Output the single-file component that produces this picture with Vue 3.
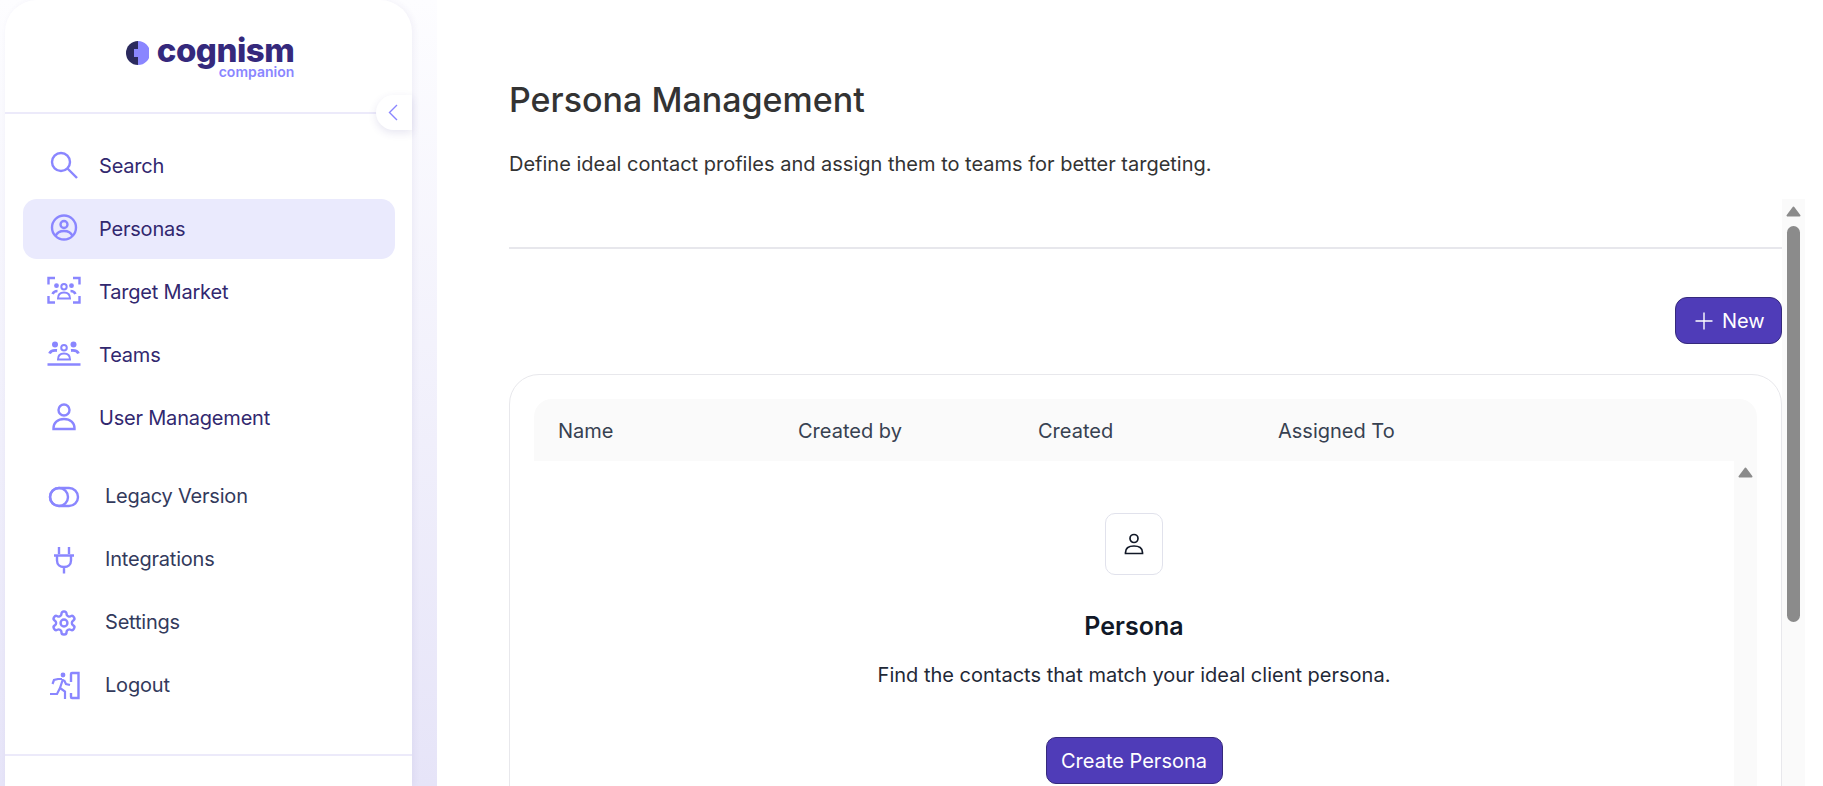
<template>
  <div class="page">
    <aside class="side">
      <div class="logo-box">
        <div class="logo">
          <svg class="logo__mark" width="24" height="24" viewBox="0 0 24 24">
            <path d="M13 0a12 12 0 1 0 0 24z" fill="#2b2a5e" />
            <path d="M13 0a12 12 0 0 1 0 24v-8H9V8h4z" fill="#8a86ff" />
          </svg>
          <div class="logo__words">
            <div class="logo__name">cognism</div>
            <div class="logo__sub">companion</div>
          </div>
        </div>
        <button class="collapse">
          <svg width="10" height="17" viewBox="0 0 10 17" fill="none" stroke="#8a86ff" stroke-width="1.400">
            <path d="M9 1 1.500 8.500 9 16" />
          </svg>
        </button>
      </div>

      <nav class="nav">
        <a v-for="item in mainLinks" :key="item.label" class="nav__item" :class="{ 'nav__item--on': item.on }">
          <span class="nav__icon" v-html="item.icon"></span>
          <span class="nav__label">{{ item.label }}</span>
        </a>
      </nav>

      <nav class="nav nav--second">
        <a v-for="item in otherLinks" :key="item.label" class="nav__item nav__item--plain">
          <span class="nav__icon" v-html="item.icon"></span>
          <span class="nav__label">{{ item.label }}</span>
        </a>
      </nav>

      <div class="side__foot"></div>
    </aside>

    <div class="gutter"></div>

    <main class="main">
      <header class="head">
        <h1 class="head__title">Persona Management</h1>
        <p class="head__text">Define ideal contact profiles and assign them to teams for better targeting.</p>
      </header>

      <div class="body">
        <div class="body__col">
          <hr class="rule" />
          <div class="actions">
            <button class="btn btn--new">
              <svg width="18" height="18" viewBox="0 0 18 18" stroke="#fff" stroke-width="1.400"><path d="M9 0.500v17M0.500 9h17" /></svg>
              New
            </button>
          </div>

          <section class="card">
            <div class="table-head">
              <span v-for="col in columns" :key="col" class="table-head__cell">{{ col }}</span>
            </div>
            <div class="table-body">
              <div class="empty">
                <div class="empty__icon">
                  <svg width="20" height="22" viewBox="0 0 20 22" fill="none" stroke="#111827" stroke-width="1.700">
                    <circle cx="10" cy="5.500" r="4" />
                    <path d="M1.500 20.500v-1c0-4.500 3.500-6.500 8.500-6.500s8.500 2 8.500 6.500v1z" />
                  </svg>
                </div>
                <h2 class="empty__title">Persona</h2>
                <p class="empty__text">Find the contacts that match your ideal client persona.</p>
                <button class="btn btn--create">Create Persona</button>
              </div>
              <div class="bar bar--inner">
                <svg class="bar__arrow" width="15" height="11" viewBox="0 0 15 11" fill="#8b8b8b" stroke="#8b8b8b" stroke-width="2" stroke-linejoin="round"><path d="M7.500 1.500 1.500 9.500h12z" /></svg>
              </div>
            </div>
          </section>
        </div>

        <div class="bar">
          <svg class="bar__arrow" width="15" height="11" viewBox="0 0 15 11" fill="#8b8b8b" stroke="#8b8b8b" stroke-width="2" stroke-linejoin="round"><path d="M7.500 1.500 1.500 9.500h12z" /></svg>
          <div class="bar__thumb"></div>
        </div>
      </div>
    </main>
  </div>
</template>

<script setup>
const wrap = (inner) =>
  `<svg width="36" height="32" viewBox="0 0 36 32" fill="none" stroke="#8a86ff" stroke-width="2.400">${inner}</svg>`

const dot = (x, y, r) => `<circle cx="${x}" cy="${y}" r="${r}" fill="#8a86ff" stroke="none" />`

const mainLinks = [
  {
    label: 'Search',
    icon: wrap('<circle cx="15" cy="12" r="9" /><path d="m21.500 18.500 9.500 9.500" />')
  },
  {
    label: 'Personas',
    on: true,
    icon: wrap('<circle cx="18" cy="14.500" r="12" /><circle cx="18" cy="11.500" r="3.500" /><path d="M9.500 23c1.500-3.500 4.500-5 8.500-5s7 1.500 8.500 5" />')
  },
  {
    label: 'Target Market',
    icon: wrap(`<path d="M9 2H2.500v6.500M27 2h6.500v6.500M2.500 20v6.500H9M33.500 20v6.500H27" />
      <circle cx="18" cy="10.700" r="2.700" stroke-width="2" />
      ${dot(10.5, 9.7, 2.4)}${dot(25.5, 9.7, 2.4)}
      <path d="M12 22.500c0-4 2-6 6-6s6 2 6 6z" stroke-width="2" />
      <path d="M6.500 18c1-2 3-3 5-3M29.500 18c-1-2-3-3-5-3" stroke-width="2.600" />`)
  },
  {
    label: 'Teams',
    icon: wrap(`<circle cx="18" cy="8.700" r="2.800" stroke-width="2" />
      ${dot(9, 5.600, 3)}${dot(27.5, 5.600, 3)}
      <path d="M12 20.500c0-4 2-6 6-6s6 2 6 6z" stroke-width="2" />
      <path d="M3.500 14.500c1-2.500 3.500-3.500 7.500-3M32.500 14.500c-1-2.500-3.500-3.500-7.500-3" stroke-width="2.800" />
      <path d="M1.500 25.500h33" />`)
  },
  {
    label: 'User Management',
    icon: wrap('<circle cx="18" cy="8" r="5.500" /><path d="M7.500 27v-1c0-5 4-9 10.500-9s10.500 4 10.500 9v1z" />')
  }
]

const otherLinks = [
  {
    label: 'Legacy Version',
    icon: wrap('<rect x="4" y="8" width="28" height="18" rx="9" /><circle cx="13" cy="17" r="9" />')
  },
  {
    label: 'Integrations',
    icon: wrap('<path d="M13 4v7M23 4v7M8 12.500h20M11 12.500v5c0 4 3 6.500 7 6.500s7-2.500 7-6.500v-5M18 24v6.500" />')
  },
  {
    label: 'Settings',
    icon: wrap(`<g transform="translate(4.200 3.200) scale(1.150)" stroke-width="2.100">
      <path d="M12.220 2h-.44a2 2 0 0 0-2 2v.18a2 2 0 0 1-1 1.730l-.43.250a2 2 0 0 1-2 0l-.15-.08a2 2 0 0 0-2.730.730l-.22.380a2 2 0 0 0 .730 2.730l.15.100a2 2 0 0 1 1 1.720v.510a2 2 0 0 1-1 1.740l-.15.090a2 2 0 0 0-.730 2.730l.22.380a2 2 0 0 0 2.730.730l.15-.08a2 2 0 0 1 2 0l.43.250a2 2 0 0 1 1 1.730V20a2 2 0 0 0 2 2h.44a2 2 0 0 0 2-2v-.18a2 2 0 0 1 1-1.730l.43-.25a2 2 0 0 1 2 0l.15.08a2 2 0 0 0 2.730-.73l.22-.39a2 2 0 0 0-.73-2.730l-.15-.08a2 2 0 0 1-1-1.740v-.5a2 2 0 0 1 1-1.740l.15-.09a2 2 0 0 0 .73-2.730l-.22-.38a2 2 0 0 0-2.730-.73l-.15.08a2 2 0 0 1-2 0l-.43-.25a2 2 0 0 1-1-1.730V4a2 2 0 0 0-2-2z" />
      <circle cx="12" cy="12" r="3" /></g>`)
  },
  {
    label: 'Logout',
    icon: wrap(`<path d="M25 13V5a1 1 0 0 1 1-1h6.500v25H26a1 1 0 0 1-1-1v-4" />
      ${dot(17, 6, 2.400)}
      <path d="M16 10l-4 0-4 1-1.500 4M17 10l-3 9 5 3.500V30M14 19l-3 6H4M18 11l2 4 4 1" stroke-width="2.200" />`)
  }
]

const columns = ['Name', 'Created by', 'Created', 'Assigned To']
</script>

<style>
html,
body {
  margin: 0;
  height: 100%;
  overflow: hidden;
  background: #fff;
}
</style>

<style scoped>
* {
  box-sizing: border-box;
}

.page {
  display: flex;
  height: 786px;
  overflow: hidden;
  padding-left: 5px;
  background: linear-gradient(180deg, #fdfdff 0%, #e6e4f8 100%);
  font-family: "Inter", "Liberation Sans", sans-serif;
}

.side {
  width: 407px;
  flex: none;
  height: 786px;
  background: #fff;
  border-radius: 32px 32px 0 0;
  box-shadow: 2px 0 6px rgba(60, 50, 140, 0.06);
  position: relative;
}

.logo-box {
  height: 114px;
  border-bottom: 2px solid #eceafa;
  padding-top: 39px;
  display: flex;
  justify-content: center;
  position: relative;
}

.logo {
  display: flex;
  gap: 8px;
  height: 44px;
  margin-left: 2px;
}

.logo__mark {
  margin-top: 2px;
}

.logo__words {
  display: flex;
  flex-direction: column;
  align-items: flex-end;
}

.logo__name {
  font-size: 33px;
  line-height: 22px;
  font-weight: 800;
  color: #35297c;
  letter-spacing: -0.5px;
}

.logo__sub {
  font-size: 14px;
  line-height: 13px;
  font-weight: 600;
  color: #8a86ff;
  margin-top: 4px;
}

.collapse {
  position: absolute;
  right: 0;
  top: 95px;
  width: 36px;
  height: 35px;
  border: 0;
  padding: 0 3px 0 0;
  background: #fff;
  border-radius: 18px 0 0 18px;
  box-shadow: 0 3px 8px rgba(60, 50, 140, 0.12);
  display: flex;
  align-items: center;
  justify-content: center;
}

.nav {
  padding: 22px 17px 0 18px;
  display: flex;
  flex-direction: column;
  gap: 3px;
}

.nav--second {
  padding-top: 18px;
}

.nav__item {
  height: 60px;
  border-radius: 14px;
  display: flex;
  align-items: center;
  gap: 17px;
  padding-left: 23px;
  color: #32286f;
  font-size: 20px;
  letter-spacing: -0.2px;
}

.nav__item--on {
  background: #eaeafd;
}

.nav__item--plain {
  gap: 23px;
  color: #333a5c;
}

.nav__icon {
  display: flex;
  width: 36px;
  height: 32px;
  flex: none;
}

.side__foot {
  position: absolute;
  left: 0;
  right: 0;
  top: 754px;
  border-top: 2px solid #eceafa;
}

.gutter {
  width: 25px;
  flex: none;
}

.main {
  flex: 1;
  min-width: 0;
  background: #fff;
  padding: 0 18px 0 72px;
}

.head {
  padding-top: 76px;
  height: 199px;
}

.head__title {
  margin: 0;
  font-size: 34px;
  line-height: 48px;
  font-weight: 500;
  color: #333;
}

.head__text {
  margin: 27px 0 0;
  font-size: 20px;
  line-height: 26px;
  color: #333;
}

.body {
  display: flex;
  height: 587px;
}

.body__col {
  flex: 1;
  min-width: 0;
}

.rule {
  margin: 48px 0 0;
  border: 0;
  border-top: 2px solid #e7e7ec;
}

.actions {
  display: flex;
  justify-content: flex-end;
  padding-top: 48px;
}

.btn {
  border: 1px solid #35297c;
  background: #4f3cb8;
  color: #fff;
  font-family: inherit;
  font-size: 20px;
  display: flex;
  align-items: center;
}

.btn--new {
  width: 107px;
  height: 47px;
  border-radius: 12px;
  gap: 9px;
  padding-left: 19px;
}

.card {
  margin-top: 30px;
  height: 500px;
  border: 1px solid #e8e8ec;
  border-radius: 30px 30px 0 0;
  padding: 24px 24px 0;
}

.table-head {
  height: 62px;
  background: #fafafa;
  border-radius: 18px 18px 0 0;
  display: flex;
  padding: 2px 0 0 24px;
  align-items: center;
}

.table-head__cell {
  width: 240px;
  font-size: 20px;
  color: #374151;
}

.table-body {
  display: flex;
  height: 400px;
}

.empty {
  flex: 1;
  min-width: 0;
  display: flex;
  flex-direction: column;
  align-items: center;
  padding-top: 52px;
}

.empty__icon {
  width: 58px;
  height: 62px;
  border: 1px solid #e1e2ec;
  border-radius: 10px;
  display: flex;
  align-items: center;
  justify-content: center;
}

.empty__title {
  margin: 34px 0 0;
  font-size: 25px;
  line-height: 34px;
  font-weight: 600;
  color: #111827;
}

.empty__text {
  margin: 19px 0 0;
  font-size: 20px;
  line-height: 26px;
  color: #1f2937;
}

.btn--create {
  margin-top: 49px;
  width: 177px;
  height: 47px;
  border-radius: 10px;
  justify-content: center;
}

.bar {
  width: 23px;
  flex: none;
  background: #fafafa;
  position: relative;
  padding-top: 7px;
}

.bar--inner {
  padding-top: 6px;
}

.bar__arrow {
  display: block;
  margin: 0 auto;
}

.bar__thumb {
  width: 13px;
  height: 396px;
  margin: 9px auto 0;
  border-radius: 7px;
  background: #8b8b8b;
}
</style>
